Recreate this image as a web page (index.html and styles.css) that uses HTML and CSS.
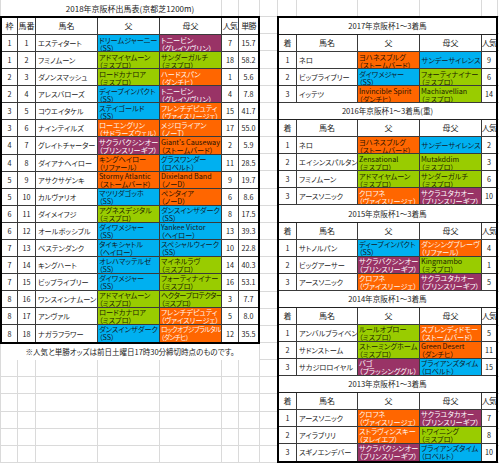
FILE: index.html
```html
<!DOCTYPE html>
<html lang="ja">
<head>
<meta charset="utf-8">
<title>2018年京阪杯出馬表</title>
<link rel="stylesheet" href="styles.css">
</head>
<body>
<div class="sheet">
  <section class="race">
    <div class="race-title">2018年京阪杯出馬表(京都芝1200m)</div>
    <div class="entries" role="table">
      <div class="row head"><span>枠</span><span>馬番</span><span>馬名</span><span>父</span><span>母父</span><span class="tight">人気</span><span class="tight">単勝</span></div>
      <div class="row"><span>1</span><span>1</span><span class="nm">エスティタート</span><span class="bl ss">ドリームジャーニー<br>（SS）</span><span class="bl pg">トニービン<br>（グレイソヴリン）</span><span>7</span><span>15.7</span></div>
      <div class="row"><span>1</span><span>2</span><span class="nm">フミノムーン</span><span class="bl mp">アドマイヤムーン<br>（ミスプロ）</span><span class="bl mp">サンダーガルチ<br>（ミスプロ）</span><span>18</span><span>58.2</span></div>
      <div class="row"><span>2</span><span>3</span><span class="nm">ダノンスマッシュ</span><span class="bl mp">ロードカナロア<br>（ミスプロ）</span><span class="bl or">ハードスパン<br>（ダンチヒ）</span><span>1</span><span>5.6</span></div>
      <div class="row"><span>2</span><span>4</span><span class="nm">アレスバローズ</span><span class="bl ss">ディープインパクト<br>（SS）</span><span class="bl pg">トニービン<br>（グレイソヴリン）</span><span>4</span><span>7.8</span></div>
      <div class="row"><span>3</span><span>5</span><span class="nm">コウエイタケル</span><span class="bl ss">ステイゴールド<br>（SS）</span><span class="bl or">フレンチデピュティ<br>（ヴァイスリージェ）</span><span>15</span><span>41.7</span></div>
      <div class="row"><span>3</span><span>6</span><span class="nm">ナインテイルズ</span><span class="bl or">ローエングリン<br>（サドラーズウェル）</span><span class="bl or">メジロライアン<br>（ノーT）</span><span>17</span><span>55.0</span></div>
      <div class="row"><span>4</span><span>7</span><span class="nm">グレイトチャーター</span><span class="bl pg">サクラバクシンオー<br>（プリンスリーギフ）</span><span class="bl ord">Giant's Causeway<br>（ストームバード）</span><span>2</span><span>5.9</span></div>
      <div class="row"><span>4</span><span>8</span><span class="nm">ダイアナヘイロー</span><span class="bl ord">キングヘイロー<br>（リファール）</span><span class="bl ss">グラスワンダー<br>（ロベルト）</span><span>11</span><span>28.5</span></div>
      <div class="row"><span>5</span><span>9</span><span class="nm">アサクサゲンキ</span><span class="bl ord">Stormy Atlantic<br>（ストームバード）</span><span class="bl ord">Dixieland Band<br>（ノーD）</span><span>9</span><span>19.7</span></div>
      <div class="row"><span>5</span><span>10</span><span class="nm">カルヴァリオ</span><span class="bl ss">マツリダゴッホ<br>（SS）</span><span class="bl ord">ペンタイア<br>（ノーD）</span><span>6</span><span>8.6</span></div>
      <div class="row"><span>6</span><span>11</span><span class="nm">ダイメイフジ</span><span class="bl mp">アグネスデジタル<br>（ミスプロ）</span><span class="bl ss">ダンスインザダーク<br>（SS）</span><span>8</span><span>17.5</span></div>
      <div class="row"><span>6</span><span>12</span><span class="nm">オールポッシブル</span><span class="bl ss">ダイワメジャー<br>（SS）</span><span class="bl ss">Yankee Victor<br>（ヘイロー）</span><span>13</span><span>39.3</span></div>
      <div class="row"><span>7</span><span>13</span><span class="nm">ベステンダンク</span><span class="bl ss">タイキシャトル<br>（ヘイロー）</span><span class="bl ss">スペシャルウィーク<br>（SS）</span><span>10</span><span>22.8</span></div>
      <div class="row"><span>7</span><span>14</span><span class="nm">キングハート</span><span class="bl ss">オレハマッテルゼ<br>（SS）</span><span class="bl mp">マイネルラヴ<br>（ミスプロ）</span><span>14</span><span>40.3</span></div>
      <div class="row"><span>7</span><span>15</span><span class="nm">ビップライブリー</span><span class="bl ss">ダイワメジャー<br>（SS）</span><span class="bl mp">フォーティナイナー<br>（ミスプロ）</span><span>16</span><span>53.1</span></div>
      <div class="row"><span>8</span><span>16</span><span class="nm">ワンスインナムーン</span><span class="bl mp">アドマイヤムーン<br>（ミスプロ）</span><span class="bl mp sq">ヘクタープロテクター<br>（ミスプロ）</span><span>3</span><span>7.7</span></div>
      <div class="row"><span>8</span><span>17</span><span class="nm">アンヴァル</span><span class="bl mp">ロードカナロア<br>（ミスプロ）</span><span class="bl or">フレンチデピュティ<br>（ヴァイスリージェ）</span><span>5</span><span>8.0</span></div>
      <div class="row last"><span>8</span><span>18</span><span class="nm">ナガラフラワー</span><span class="bl ss">ダンスインザダーク<br>（SS）</span><span class="bl or sq2">ロックオブジブラルタル<br>（ダンチヒ）</span><span>12</span><span>35.5</span></div>
    </div>
    <div class="note">※人気と単勝オッズは前日土曜日17時30分締切時点のものです。</div>
  </section>

  <section class="history">
    <div class="past" role="table">
      <div class="row yr"><span>2017年京阪杯1～3着馬</span></div>
      <div class="row head"><span>着</span><span>馬名</span><span>父</span><span>母父</span><span class="tight">人気</span></div>
      <div class="row"><span>1</span><span class="nm">ネロ</span><span class="bl ord">ヨハネスブルグ<br>（ストームバード）</span><span class="bl ss one">サンデーサイレンス</span><span>9</span></div>
      <div class="row"><span>2</span><span class="nm">ビップライブリー</span><span class="bl ss">ダイワメジャー<br>（SS）</span><span class="bl mp">フォーティナイナー<br>（ミスプロ）</span><span>6</span></div>
      <div class="row"><span>3</span><span class="nm">イッテツ</span><span class="bl ord">Invincible Spirit<br>（ダンチヒ）</span><span class="bl mp">Machiavellian<br>（ミスプロ）</span><span>14</span></div>

      <div class="row yr"><span>2016年京阪杯1～3着馬(重)</span></div>
      <div class="row head"><span>着</span><span>馬名</span><span>父</span><span>母父</span><span class="tight">人気</span></div>
      <div class="row"><span>1</span><span class="nm">ネロ</span><span class="bl ord">ヨハネスブルグ<br>（ストームバード）</span><span class="bl ss one">サンデーサイレンス</span><span>2</span></div>
      <div class="row"><span>2</span><span class="nm">エイシンスパルタン</span><span class="bl mp">Zensational<br>（ミスプロ）</span><span class="bl mp">Mutakddim<br>（ミスプロ）</span><span>3</span></div>
      <div class="row"><span>3</span><span class="nm">フミノムーン</span><span class="bl mp">アドマイヤムーン<br>（ミスプロ）</span><span class="bl mp">サンダーガルチ<br>（ミスプロ）</span><span>6</span></div>
      <div class="row"><span>3</span><span class="nm">アースソニック</span><span class="bl or">クロフネ<br>（ヴァイスリージェ）</span><span class="bl pg">サクラユタカオー<br>（プリンスリーギフ）</span><span>10</span></div>

      <div class="row yr"><span>2015年京阪杯1～3着馬</span></div>
      <div class="row head"><span>着</span><span>馬名</span><span>父</span><span>母父</span><span class="tight">人気</span></div>
      <div class="row"><span>1</span><span class="nm">サトノルパン</span><span class="bl ss">ディープインパクト<br>（SS）</span><span class="bl or">ダンシングブレーヴ<br>（リファール）</span><span>4</span></div>
      <div class="row"><span>2</span><span class="nm">ビッグアーサー</span><span class="bl pg">サクラバクシンオー<br>（プリンスリーギフ）</span><span class="bl mp">Kingmambo<br>（ミスプロ）</span><span>1</span></div>
      <div class="row"><span>3</span><span class="nm">アースソニック</span><span class="bl or">クロフネ<br>（ヴァイスリージェ）</span><span class="bl pg">サクラユタカオー<br>（プリンスリーギフ）</span><span>5</span></div>

      <div class="row yr"><span>2014年京阪杯1～3着馬</span></div>
      <div class="row head"><span>着</span><span>馬名</span><span>父</span><span>母父</span><span class="tight">人気</span></div>
      <div class="row"><span>1</span><span class="nm">アンバルブライベン</span><span class="bl mp">ルールオブロー<br>（ミスプロ）</span><span class="bl or">スプレンディドモー<br>（ストームバード）</span><span>5</span></div>
      <div class="row"><span>2</span><span class="nm">サドンストーム</span><span class="bl mp">ストーミングホーム<br>（ミスプロ）</span><span class="bl ord">Green Desert<br>（ダンチヒ）</span><span>11</span></div>
      <div class="row"><span>3</span><span class="nm">サカジロロイヤル</span><span class="bl pg">バゴ<br>（ブラッシンググル）</span><span class="bl ss">ブライアンズタイム<br>（ロベルト）</span><span>15</span></div>

      <div class="row yr"><span>2013年京阪杯1～3着馬</span></div>
      <div class="row head"><span>着</span><span>馬名</span><span>父</span><span>母父</span><span class="tight">人気</span></div>
      <div class="row"><span>1</span><span class="nm">アースソニック</span><span class="bl or">クロフネ<br>（ヴァイスリージェ）</span><span class="bl pg">サクラユタカオー<br>（プリンスリーギフ）</span><span>7</span></div>
      <div class="row"><span>2</span><span class="nm">アイラブリリ</span><span class="bl or">ストラヴィンスキー<br>（ヌレイエフ）</span><span class="bl mp">トワイニング<br>（ミスプロ）</span><span>8</span></div>
      <div class="row last"><span>3</span><span class="nm">スギノエンデバー</span><span class="bl pg">サクラバクシンオー<br>（プリンスリーギフ）</span><span class="bl ss">ブライアンズタイム<br>（ロベルト）</span><span>10</span></div>
    </div>
  </section>
</div>
</body>
</html>
```

FILE: styles.css
```css
* { box-sizing: border-box; }

html, body {
  margin: 0;
  padding: 0;
  background: #fff;
}

body {
  font-family: "Noto Sans CJK JP", "Noto Sans", sans-serif;
  font-size: 8px;
  color: #222;
  font-feature-settings: "palt";
}

/* spreadsheet canvas with its light grid */
.sheet {
  --grid: #dadada;
  width: 499px;
  height: 463px;
  overflow: hidden;
  display: flex;
  align-items: flex-start;
  background-color: #fff;
  background-image:
    linear-gradient(to right,
      var(--grid) 0 1px, transparent 1px 17px,
      var(--grid) 17px 18px, transparent 18px 35px,
      var(--grid) 35px 36px, transparent 36px 97px,
      var(--grid) 97px 98px, transparent 98px 159px,
      var(--grid) 159px 160px, transparent 160px 221px,
      var(--grid) 221px 222px, transparent 222px 238px,
      var(--grid) 238px 239px, transparent 239px 259px,
      var(--grid) 259px 260px, transparent 260px 277px,
      var(--grid) 277px 278px, transparent 278px 296px,
      var(--grid) 296px 297px, transparent 297px 357px,
      var(--grid) 357px 358px, transparent 358px 419px,
      var(--grid) 419px 420px, transparent 420px 481px,
      var(--grid) 481px 482px, transparent 482px 497px,
      var(--grid) 497px 498px, transparent 498px),
    repeating-linear-gradient(to bottom, transparent 0 16.15px, var(--grid) 16.15px 17.15px);
}

.race {
  flex: none;
  width: 260px;
}

.history {
  flex: none;
  width: 221px;
  margin-left: 17px;
  margin-top: 16.15px;
}

.race-title {
  height: 16.15px;
  display: flex;
  align-items: center;
  justify-content: center;
  background: linear-gradient(#fff, #fff) 1px 0 / 220px 16.15px no-repeat;
}

.note {
  height: 15.5px;
  margin-left: 1px;
  width: 258px;
  display: flex;
  align-items: center;
  justify-content: center;
  font-size: 7.5px;
  background: #fff;
}

/* tables built on grids so every line lands on the sheet grid */
.entries,
.past {
  display: grid;
  border: 2px solid #000;
  background: #fff;
}

.entries {
  width: 260px;
  grid-template-columns: 16px 18px 62px 62px 62px 17px 19px;
  grid-template-rows: repeat(19, 17.05px);
}

.past {
  width: 221px;
  grid-template-columns: 18px 61px 62px 62px 14px;
  grid-template-rows: repeat(26, 17.04px);
}

.row { display: contents; }

.row > span {
  display: flex;
  flex-direction: column;
  justify-content: center;
  align-items: center;
  border-right: 1px solid #3a3a3a;
  border-bottom: 1px solid #3a3a3a;
  overflow: hidden;
  white-space: nowrap;
  line-height: 8px;
  font-size: 7.2px;
  background: #fff;
}

.row > span:last-child { border-right: 0; }
.row.last > span { border-bottom: 0; }

.head > span { font-size: 8px; }
.tight { letter-spacing: -0.8px; }
.sq { letter-spacing: -0.45px; }
.row > .sq2 { font-size: 6.6px; letter-spacing: -0.5px; }

.yr > span {
  grid-column: 1 / -1;
  font-size: 7.6px;
  border-bottom-color: #222;
}

.nm {
  align-items: flex-start !important;
  padding-left: 2px;
}

.bl {
  display: block !important;
  padding: 0.5px 0 0 1px;
  text-align: left;
}

.bl.one {
  display: flex !important;
  padding-top: 0;
}

.ss { background: #00b0f0 !important; color: #10202a; }
.mp { background: #99cc00 !important; color: #1c2400; }
.or { background: #ff6600 !important; color: #fff4ec; }
.ord { background: #ff6600 !important; color: #2a1200; }
.pg { background: #993366 !important; color: #fff; }
```
